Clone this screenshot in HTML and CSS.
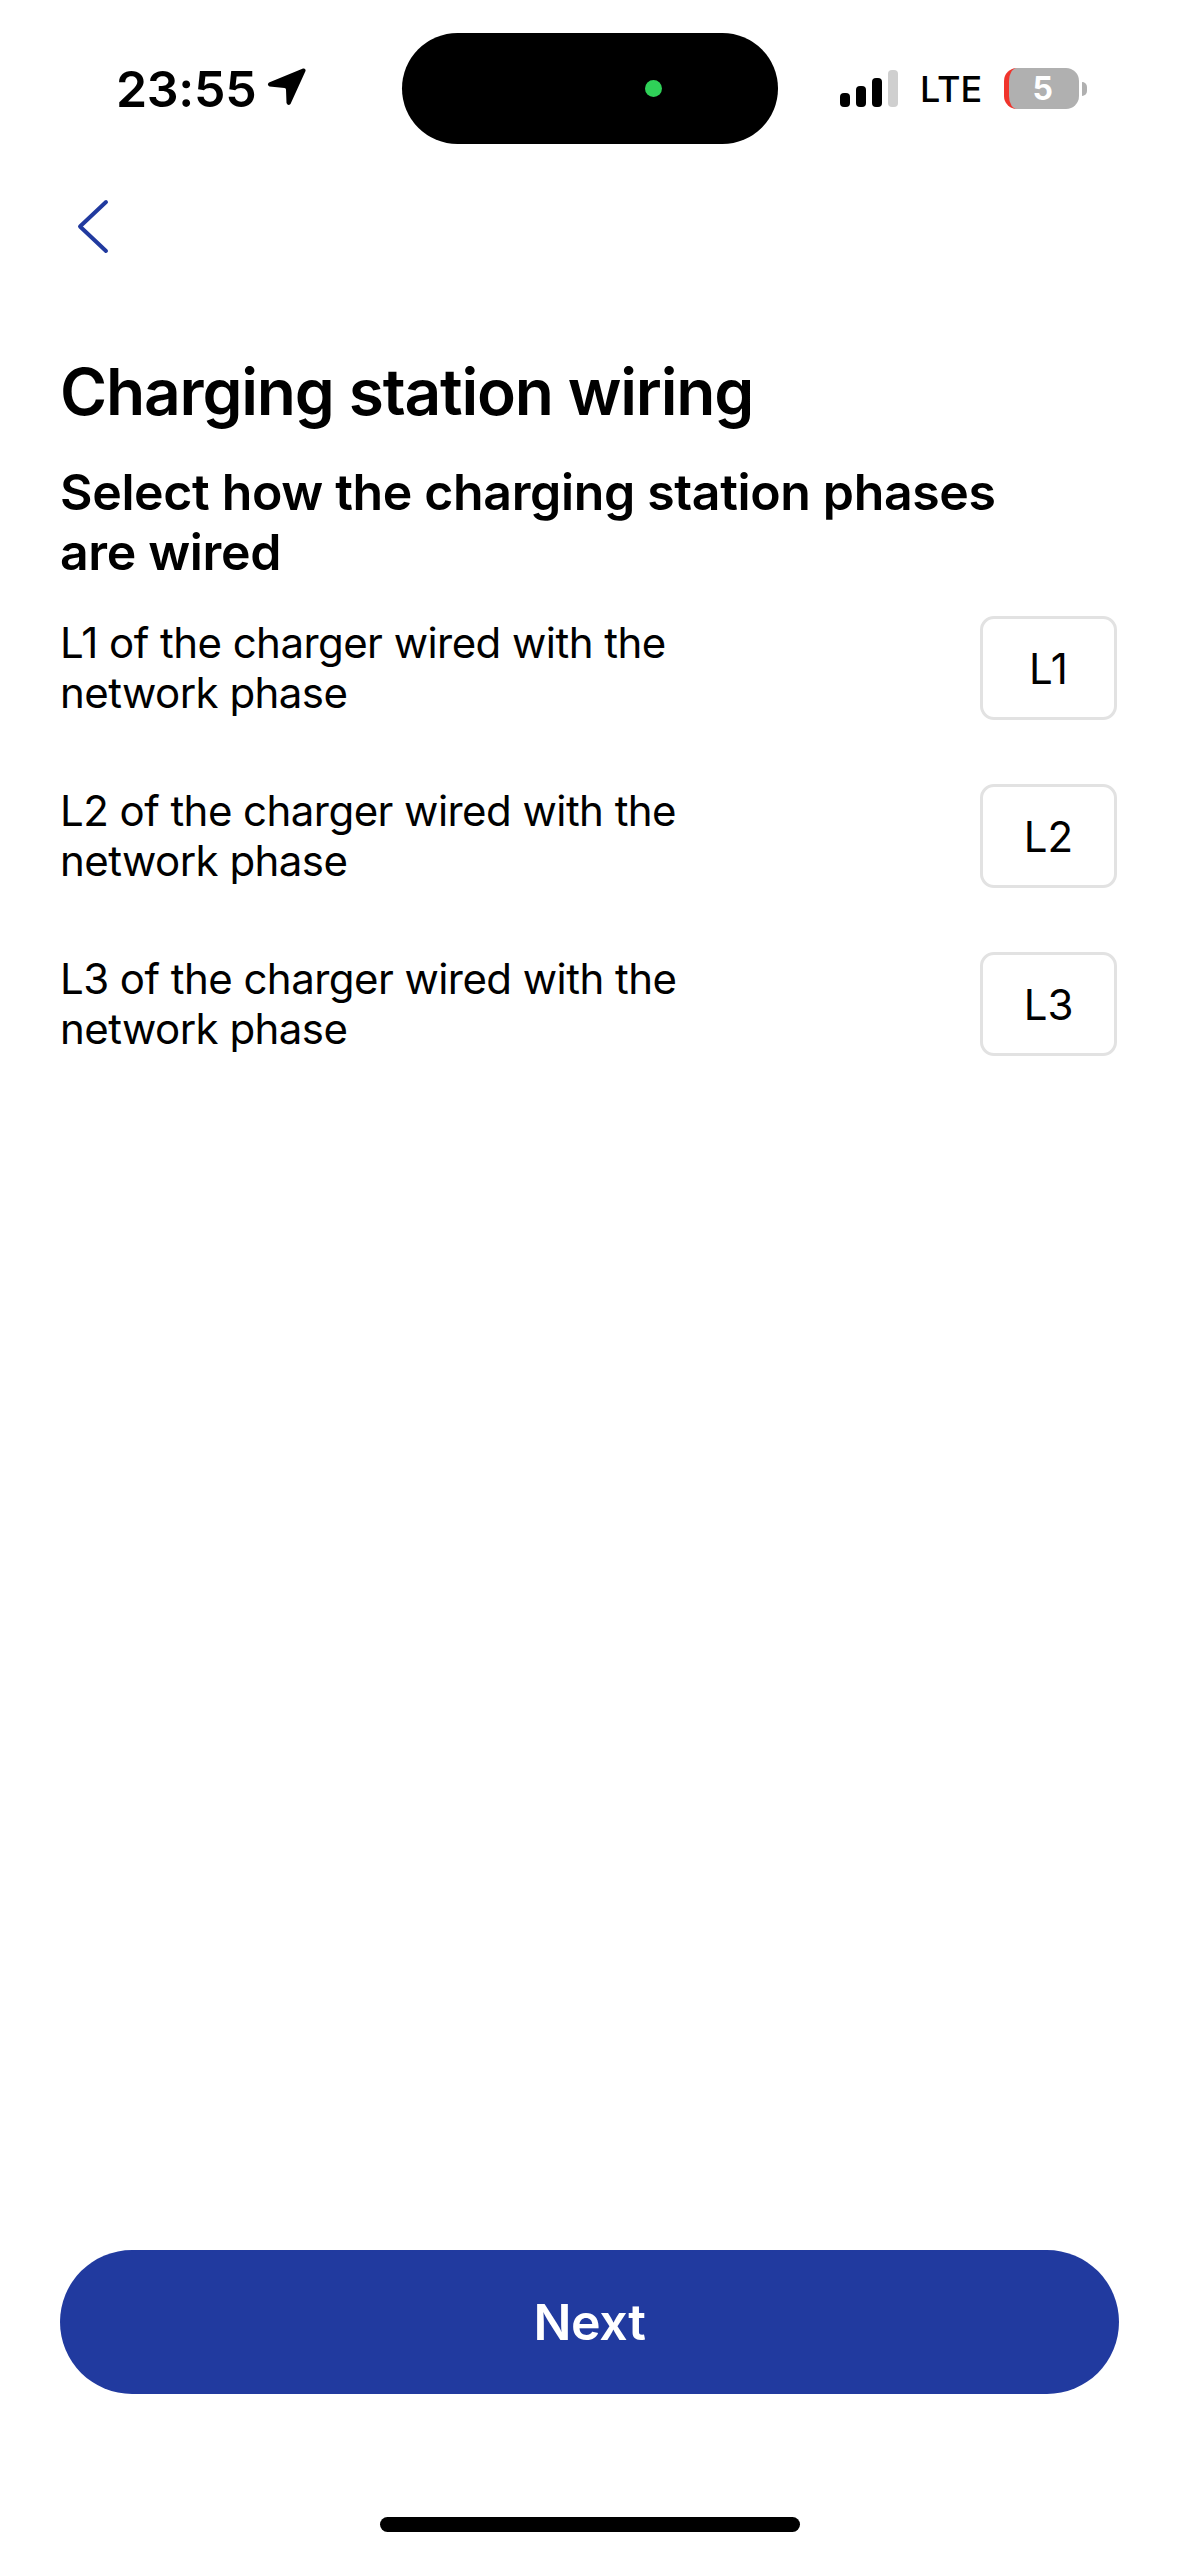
FILE: index.html
```html
<!DOCTYPE html>
<html lang="en">
<head>
  <meta charset="UTF-8">
  <meta name="viewport" content="width=device-width, initial-scale=1.0">
  <title>Charging station wiring</title>
  <link rel="stylesheet" href="styles.css">
</head>
<body>

  <header class="status-bar">
    <div class="status-left">
      <span class="time">23:55</span>
      <svg class="location" width="40" height="40" viewBox="0 0 40 40">
        <path d="M36 1.500 L2 15.500 Q-0.500 18 2.500 19.500 L17.500 21 Q19 21 19 22.500 L19.500 36 Q21 39.500 23.500 37 L38.500 4 Q39 1 36 1.500 Z" fill="#000"/>
      </svg>
    </div>
    <div class="island"><span class="island-dot"></span></div>
    <div class="status-right">
      <div class="signal">
        <span class="bar bar-1"></span>
        <span class="bar bar-2"></span>
        <span class="bar bar-3"></span>
        <span class="bar bar-4"></span>
      </div>
      <span class="network">LTE</span>
      <div class="battery">
        <div class="battery-body"><span class="battery-level">5</span></div>
        <span class="battery-cap"></span>
      </div>
    </div>
  </header>

  <main>
    <div class="back">
      <svg width="34" height="56" viewBox="0 0 34 56">
        <path d="M30 3 L4 27.500 L30 52" fill="none" stroke="#213a9f" stroke-width="4" stroke-linecap="round" stroke-linejoin="round"/>
      </svg>
    </div>

    <h1>Charging station wiring</h1>
    <h2>Select how the charging station phases are wired</h2>

    <div class="phase-row">
      <p>L1 of the charger wired with the network phase</p>
      <div class="phase-box">L1</div>
    </div>
    <div class="phase-row">
      <p>L2 of the charger wired with the network phase</p>
      <div class="phase-box">L2</div>
    </div>
    <div class="phase-row">
      <p>L3 of the charger wired with the network phase</p>
      <div class="phase-box">L3</div>
    </div>

    <div class="spacer"></div>

    <button class="next-btn">Next</button>
    <div class="home-bar"></div>
  </main>

</body>
</html>
```

FILE: styles.css
```css
* {
  box-sizing: border-box;
}
html, body {
  margin: 0;
  padding: 0;
}
body {
  width: 1179px;
  height: 2556px;
  background-color: #fff;
  color: #000;
  font-family: Inter, "Liberation Sans", sans-serif;
  display: flex;
  flex-direction: column;
  overflow: hidden;
}

.status-bar {
  height: 144px;
  padding: 33px 0 0 116px;
  display: flex;
  align-items: flex-start;
}
.status-left {
  width: 286px;
  height: 111px;
  display: flex;
  align-items: center;
  gap: 11px;
}
.time {
  font-size: 50px;
  font-weight: 600;
  letter-spacing: -0.3px;
  line-height: 1;
}
.location {
  margin-top: -3px;
}
.island {
  width: 376px;
  height: 111px;
  background-color: #000;
  border-radius: 56px;
  display: flex;
  align-items: center;
  padding-left: 243px;
}
.island-dot {
  width: 17px;
  height: 17px;
  border-radius: 50%;
  background-color: #2fd158;
}
.status-right {
  height: 111px;
  margin-left: 62px;
  display: flex;
  align-items: center;
}
.signal {
  display: flex;
  align-items: flex-end;
  gap: 6px;
  height: 37px;
}
.bar {
  width: 10px;
  border-radius: 4px;
  background-color: #000;
}
.bar-1 { height: 14px; }
.bar-2 { height: 21px; }
.bar-3 { height: 29px; }
.bar-4 { height: 37px; background-color: #cfcfcf; }
.network {
  margin-left: 22px;
  font-size: 36px;
  font-weight: 500;
  line-height: 1;
}
.battery {
  margin-left: 22px;
  display: flex;
  align-items: center;
}
.battery-body {
  width: 75px;
  height: 41px;
  border-radius: 13px;
  background-color: #b0b0b0;
  border-left: 5px solid #f0342c;
  display: flex;
  align-items: center;
  justify-content: center;
}
.battery-level {
  padding-right: 3px;
  color: #fff;
  font-size: 32px;
  font-weight: 700;
  line-height: 1;
}
.battery-cap {
  width: 5px;
  height: 14px;
  margin-left: 3px;
  background-color: #b0b0b0;
  border-radius: 0 7px 7px 0;
}

main {
  flex: 1;
  display: flex;
  flex-direction: column;
  padding: 0 60px;
}
.back {
  height: 56px;
  margin: 55px 0 0 16px;
}
h1 {
  margin: 99px 0 0;
  font-size: 64px;
  font-weight: 600;
  letter-spacing: -1.17px;
  line-height: 76px;
}
h2 {
  margin: 32px 0 0;
  width: 980px;
  font-size: 50px;
  font-weight: 600;
  letter-spacing: -0.35px;
  line-height: 60px;
}
.phase-row {
  display: flex;
  justify-content: space-between;
  align-items: flex-start;
  height: 168px;
}
h2 + .phase-row {
  margin-top: 34px;
}
.phase-row p {
  margin: 0;
  padding-top: 2px;
  width: 640px;
  font-size: 42px;
  font-weight: 400;
  letter-spacing: -0.55px;
  line-height: 50px;
}
.phase-box {
  width: 137px;
  height: 104px;
  margin-right: 2px;
  border: 3px solid #e2e2e2;
  border-radius: 14px;
  display: flex;
  align-items: center;
  justify-content: center;
  font-size: 42px;
}
.spacer {
  flex: 1;
}
.next-btn {
  display: block;
  width: 1059px;
  height: 144px;
  border: 0;
  border-radius: 72px;
  background-color: #213a9f;
  color: #fff;
  font-family: inherit;
  font-size: 50px;
  font-weight: 600;
  letter-spacing: -0.3px;
}
.home-bar {
  width: 420px;
  height: 15px;
  margin: 123px 0 24px 320px;
  border-radius: 8px;
  background-color: #000;
}
```
